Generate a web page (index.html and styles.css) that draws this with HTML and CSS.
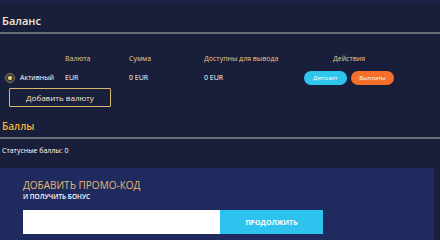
FILE: index.html
```html
<!DOCTYPE html>
<html lang="ru">

<head>
    <meta charset="UTF-8">
    <title>Баланс</title>
    <link rel="stylesheet" href="styles.css">
</head>

<body>
    <div class="page">
        <section class="balance">
            <h2 class="title">Баланс</h2>
            <div class="rule"></div>

            <div class="wallets">
                <div class="cell"></div>
                <div class="cell head">Валюта</div>
                <div class="cell head">Сумма</div>
                <div class="cell head">Доступны для вывода</div>
                <div class="cell head center">Действия</div>

                <div class="cell status">
                    <span class="radio"><span class="dot"></span></span>
                    Активный
                </div>
                <div class="cell">EUR</div>
                <div class="cell">0 EUR</div>
                <div class="cell">0 EUR</div>
                <div class="cell center actions">
                    <button class="pill deposit">Депозит</button>
                    <button class="pill payout">Выплаты</button>
                </div>
            </div>

            <button class="add-currency">Добавить валюту</button>
        </section>

        <section class="points">
            <h2 class="title gold">Баллы</h2>
            <div class="rule"></div>
            <p class="status-points">Статусные баллы: 0</p>
        </section>

        <section class="promo">
            <div class="promo-title">ДОБАВИТЬ ПРОМО-КОД</div>
            <div class="promo-sub">И ПОЛУЧИТЬ БОНУС</div>
            <form class="promo-form">
                <input type="text" class="promo-input">
                <button type="submit" class="promo-btn">ПРОДОЛЖИТЬ</button>
            </form>
        </section>
    </div>
</body>

</html>
```

FILE: styles.css
```css
body {
    margin: 0;
    font-family: 'Open Sans', 'Noto Sans', sans-serif;
    background-color: #191e3b;
    color: #ffffff;
}

.page {
    width: 440px;
    height: 240px;
    overflow: hidden;
    border-top: 3px solid #1d2344;
    box-sizing: border-box;
}

.title {
    margin: 0;
    padding: 10px 2px 0;
    height: 19px;
    font-size: 11px;
    font-weight: 600;
    color: #f1e6d8;
}

.title.gold {
    color: #f2b43a;
    font-size: 10px;
    padding-top: 12px;
    height: 18px;
}

.rule {
    height: 2px;
    background-color: #6b6e77;
}

.wallets {
    display: grid;
    grid-template-columns: 60px 64px 75px 95px 100px;
    grid-template-rows: 20px 19px;
    margin: 14px 0 0 5px;
    font-size: 7px;
}

.cell {
    display: flex;
    align-items: center;
}

.cell.head {
    color: #e5c98c;
}

.cell.center {
    justify-content: center;
}

.status {
    gap: 5px;
}

.radio {
    width: 8px;
    height: 8px;
    border-radius: 50%;
    background-color: #3a3a40;
    border: 1px solid #8a7a55;
    display: flex;
    align-items: center;
    justify-content: center;
}

.dot {
    width: 4px;
    height: 4px;
    border-radius: 50%;
    background-color: #f5d66a;
}

.actions {
    gap: 4px;
}

.pill {
    width: 43px;
    height: 14px;
    border: none;
    border-radius: 8px;
    font-family: inherit;
    font-size: 6px;
    color: #ffffff;
    padding: 0;
}

.deposit {
    background-color: #2fc6ee;
}

.payout {
    background-color: #f4702a;
}

.add-currency {
    display: block;
    margin: 1px 0 0 9px;
    width: 102px;
    height: 19px;
    background: transparent;
    border: 1px solid #d8b86c;
    border-radius: 1px;
    color: #f3e7cc;
    font-family: inherit;
    font-size: 8px;
}

.status-points {
    margin: 0;
    padding: 7px 2px 0;
    height: 20px;
    font-size: 7px;
}

.promo {
    margin-top: 2px;
    width: 434px;
    height: 80px;
    box-sizing: border-box;
    padding: 11px 0 0 23px;
    background-color: #1f2b5e;
}

.promo-title {
    font-size: 10px;
    color: #e9b872;
    line-height: 13px;
}

.promo-sub {
    font-size: 6.5px;
    font-weight: 600;
    line-height: 9px;
}

.promo-form {
    display: flex;
    margin-top: 9px;
}

.promo-input {
    width: 197px;
    height: 24px;
    box-sizing: border-box;
    border: none;
    margin: 0;
    background-color: #ffffff;
}

.promo-btn {
    width: 103px;
    height: 24px;
    border: none;
    background-color: #2dc3ee;
    color: #ffffff;
    font-family: inherit;
    font-size: 7px;
    font-weight: 700;
}
```
